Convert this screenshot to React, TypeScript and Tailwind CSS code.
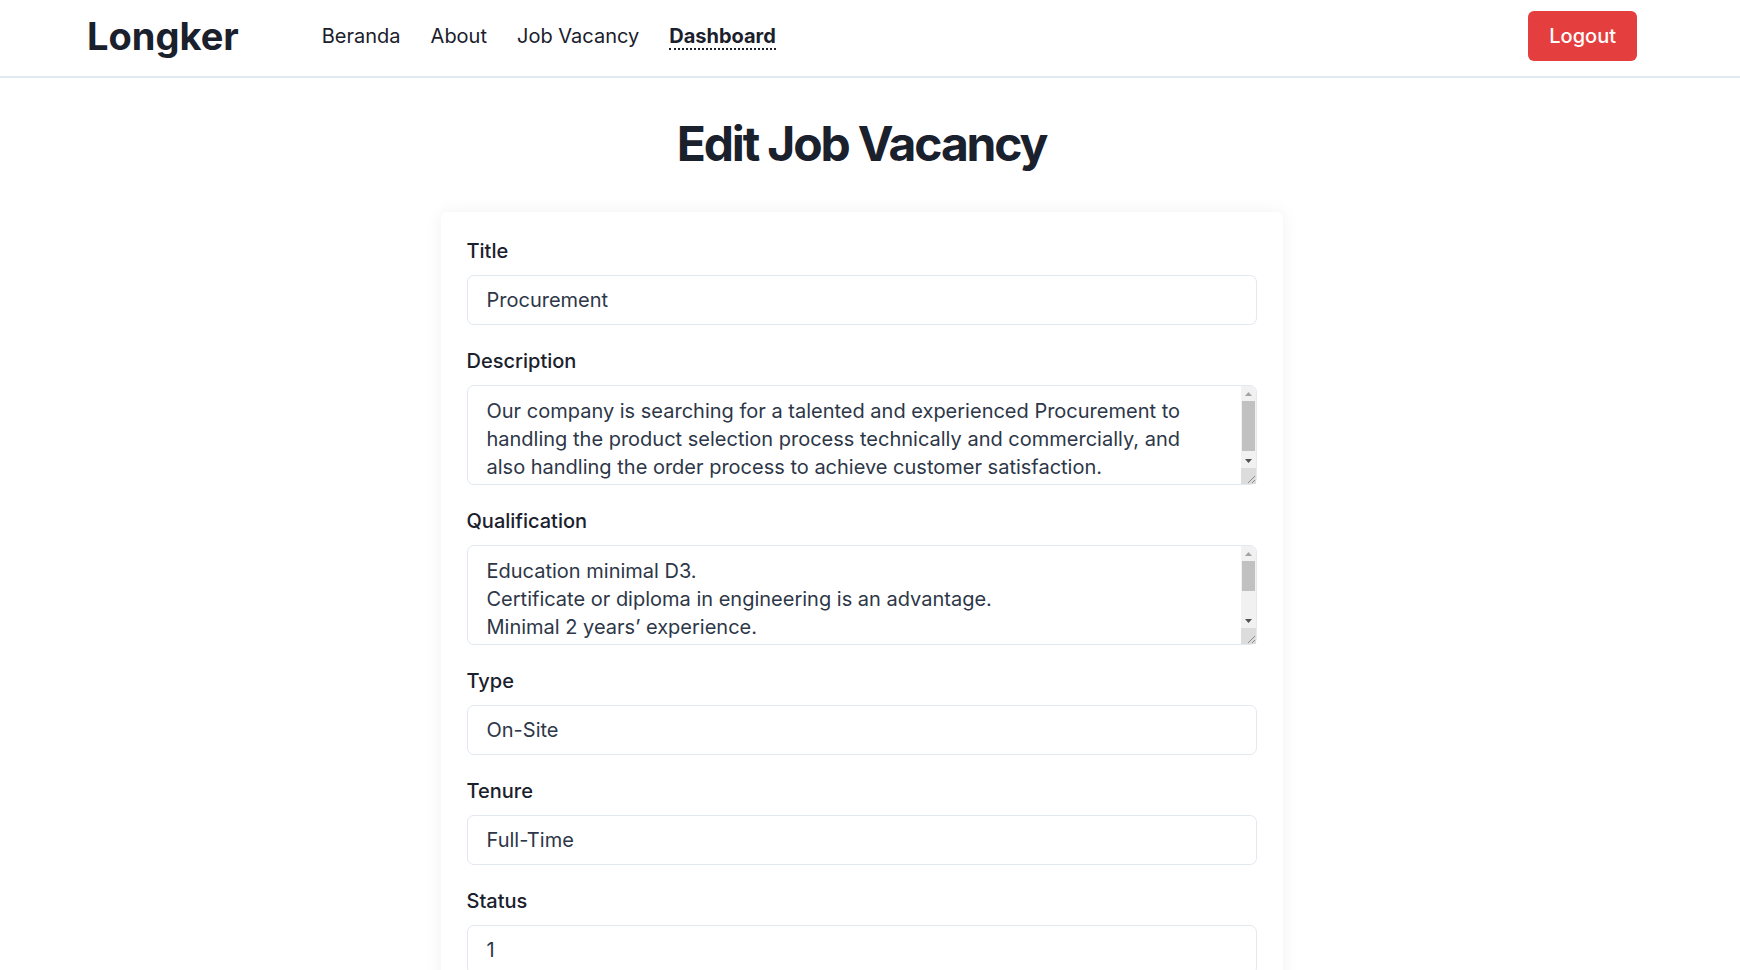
import { useState } from "react";

const navLinks = ["Beranda", "About", "Job Vacancy", "Dashboard"];

function Navbar() {
  return (
    <nav className="flex items-center justify-between border-b-2 border-[#e2e8f0] pl-[87px] pr-[103px] pt-[11px] pb-[15px]">
      <div className="flex items-center">
        <a href="#" className="text-[38px] font-bold leading-[50px] text-[#1a202c]">
          Longker
        </a>
        <ul className="ml-[83px] flex items-center gap-[30px] text-xl text-[#1a202c]">
          {navLinks.map((link) => (
            <li key={link}>
              <a
                href="#"
                className={
                  link === "Dashboard"
                    ? "border-b-2 border-dotted border-[#1a202c] font-bold"
                    : ""
                }
              >
                {link}
              </a>
            </li>
          ))}
        </ul>
      </div>
      <button className="h-[50px] rounded-md bg-[#e53e3e] px-[21px] text-xl font-medium text-white">
        Logout
      </button>
    </nav>
  );
}

function Field({ label, children }: { label: string; children: React.ReactNode }) {
  return (
    <div className="flex flex-col">
      <label className="mb-[10px] text-xl leading-7 font-medium text-[#1a202c]">{label}</label>
      {children}
    </div>
  );
}

// classic scrollbar drawn over the textarea (thumb size in px)
function FakeScrollbar({ thumb }: { thumb: number }) {
  return (
    <div className="pointer-events-none absolute top-px right-px bottom-px flex w-[15px] flex-col overflow-hidden rounded-tr-[6px] bg-[#f1f1f1]">
      <div className="flex h-[15px] items-center justify-center">
        <svg width="7" height="4" viewBox="0 0 7 4">
          <path d="M0 4 L3.5 0 L7 4 Z" fill="#a3a3a3" />
        </svg>
      </div>
      <div className="flex-1 px-px">
        <div className="w-full bg-[#c1c1c1]" style={{ height: thumb }} />
      </div>
      <div className="flex h-[15px] items-center justify-center">
        <svg width="7" height="4" viewBox="0 0 7 4">
          <path d="M0 0 L7 0 L3.5 4 Z" fill="#505050" />
        </svg>
      </div>
      <div className="h-[16px] bg-[#dcdcdc]">
        <svg width="15" height="16" viewBox="0 0 15 16">
          <path d="M14 8 L7 15 M14 12 L11 15" stroke="#8a8a8a" strokeWidth="1" />
        </svg>
      </div>
    </div>
  );
}

const inputClass =
  "h-[50px] w-full rounded-[7px] border border-[#e2e8f0] bg-white px-[19px] text-xl text-[#2d3748] outline-none";
const textareaClass =
  "block h-[100px] w-full resize-none overflow-hidden rounded-[7px] border border-[#e2e8f0] bg-white pl-[19px] pr-[40px] pt-[11px] pb-3 text-xl leading-7 text-[#2d3748] outline-none";

export default function App() {
  const [form, setForm] = useState({
    title: "Procurement",
    description:
      "Our company is searching for a talented and experienced Procurement to handling the product selection process technically and commercially, and also handling the order process to achieve customer satisfaction.",
    qualification:
      "Education minimal D3.\nCertificate or diploma in engineering is an advantage.\nMinimal 2 years\u2019 experience.\nGood communication skills.\nAble to work in a team.",
    type: "On-Site",
    tenure: "Full-Time",
    status: "1",
  });

  const set = (key: keyof typeof form) => (e: { target: { value: string } }) =>
    setForm({ ...form, [key]: e.target.value });

  return (
    <div className="min-h-screen bg-white font-['Inter',sans-serif] text-[#1a202c]">
      <Navbar />
      <main className="pr-[17px] pb-16">
        <h1 className="mt-[42px] text-center text-5xl font-bold tracking-[-0.045em] text-[#1a202c]">
          Edit Job Vacancy
        </h1>
        <form className="mx-auto mt-[44px] flex w-[842px] flex-col gap-[22px] rounded-md bg-white px-[26px] pt-[25px] pb-8 shadow-[0_0_18px_rgba(0,0,0,0.06)]">
          <Field label="Title">
            <input className={inputClass} value={form.title} onChange={set("title")} />
          </Field>
          <Field label="Description">
            <div className="relative">
              <textarea className={textareaClass} value={form.description} onChange={set("description")} />
              <FakeScrollbar thumb={50} />
            </div>
          </Field>
          <Field label="Qualification">
            <div className="relative">
              <textarea className={textareaClass} value={form.qualification} onChange={set("qualification")} />
              <FakeScrollbar thumb={30} />
            </div>
          </Field>
          <Field label="Type">
            <input className={inputClass} value={form.type} onChange={set("type")} />
          </Field>
          <Field label="Tenure">
            <input className={inputClass} value={form.tenure} onChange={set("tenure")} />
          </Field>
          <Field label="Status">
            <input className={inputClass} value={form.status} onChange={set("status")} />
          </Field>
          <button
            type="button"
            className="mt-2 h-[50px] w-full rounded-md bg-[#3182ce] text-xl font-medium text-white"
          >
            Update
          </button>
        </form>
      </main>
    </div>
  );
}
